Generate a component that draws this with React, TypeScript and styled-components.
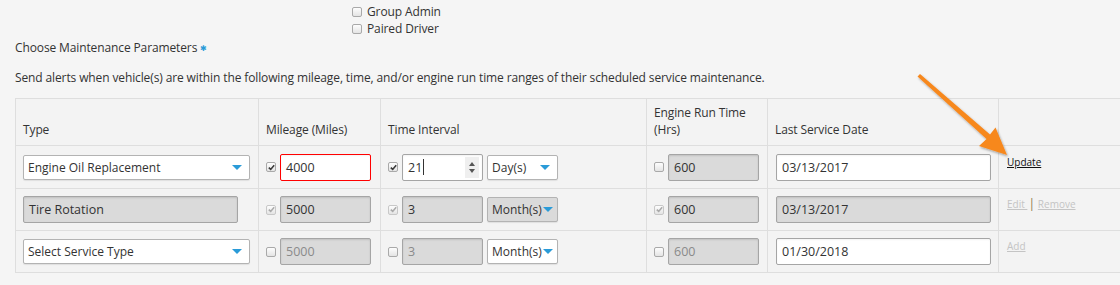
import React from "react";
import styled, { createGlobalStyle, css } from "styled-components";

const GlobalStyle = createGlobalStyle`
  html, body {
    margin: 0;
    background: #f5f5f5;
    overflow: hidden;
  }
  body {
    font-family: "Open Sans", "Liberation Sans", sans-serif;
    font-size: 12px;
    letter-spacing: -0.12px;
    color: #333;
  }
`;

const Page = styled.div`
  position: relative;
  width: 1120px;
  height: 285px;
  padding-left: 15px;
  box-sizing: border-box;
`;

const RoleList = styled.div`
  padding-top: 3px;
  margin-left: 337px;
  display: flex;
  flex-direction: column;
`;

const RoleItem = styled.label`
  display: flex;
  align-items: center;
  gap: 5px;
  line-height: 17px;
`;

const Title = styled.div`
  margin-top: 2px;
  line-height: 17px;
`;

const Required = styled.span`
  color: #2a9bd8;
  font-size: 8px;
  margin-left: 3px;
  vertical-align: 1px;
`;

const Description = styled.div`
  margin-top: 13px;
  line-height: 17px;
`;

const Table = styled.table`
  margin-top: 12px;
  border-collapse: collapse;
  table-layout: fixed;
  width: 1140px;
  background: #f3f3f3;
`;

const Th = styled.th<{ $w?: number }>`
  width: ${(p) => (p.$w ? `${p.$w}px` : "auto")};
  height: 47px;
  border: 1px solid #dedede;
  padding: 0 8px 7px 7px;
  text-align: left;
  vertical-align: bottom;
  font-weight: normal;
  line-height: 17px;
  box-sizing: border-box;
`;

const Tr = styled.tr<{ $h: number }>`
  height: ${(p) => p.$h}px;
`;

const Td = styled.td<{ $pl?: number }>`
  border: 1px solid #dedede;
  padding: 0 7px 0 ${(p) => p.$pl ?? 7}px;
  vertical-align: middle;
`;

const ActionCell = styled.td`
  border: 1px solid #dedede;
  padding: 0 7px 12px 8px;
  vertical-align: middle;
`;

const Inline = styled.div`
  display: flex;
  align-items: center;
  gap: 4px;
`;

const Box = styled.span<{ $disabled?: boolean }>`
  display: inline-flex;
  align-items: center;
  justify-content: center;
  width: 10px;
  height: 10px;
  flex: none;
  box-sizing: border-box;
  border: 1px solid ${(p) => (p.$disabled ? "#c8c8c8" : "#a9a9a9")};
  border-radius: 2px;
  background: linear-gradient(#fdfdfd, #e4e4e4);
  color: ${(p) => (p.$disabled ? "#aaa" : "#3a3a3a")};
`;

const field = css`
  box-sizing: border-box;
  display: flex;
  align-items: center;
  border-radius: 2px;
  letter-spacing: 0;
`;

type Tone = "white" | "error" | "gray" | "muted";

const TextBox = styled.div<{ $w: number; $tone: Tone }>`
  ${field};
  width: ${(p) => p.$w}px;
  height: 27px;
  padding: 0 5px;
  font-size: 12.5px;
  border: 1px solid ${(p) => (p.$tone === "error" ? "#ff0000" : "#a5a5a5")};
  background: ${(p) => (p.$tone === "white" || p.$tone === "error" ? "#fff" : "#dadada")};
  color: ${(p) => (p.$tone === "muted" ? "#8a8a8a" : "#333")};
  box-shadow: ${(p) =>
    p.$tone === "gray" || p.$tone === "muted"
      ? "inset 0 1px 2px rgba(0,0,0,0.12)"
      : "inset 0 1px 2px rgba(0,0,0,0.05)"};
`;

const Select = styled.div<{ $w: number; $gray?: boolean; $compact?: boolean }>`
  ${field};
  width: ${(p) => p.$w}px;
  height: 25px;
  font-size: 12px;
  justify-content: space-between;
  padding: ${(p) => (p.$compact ? "0 4px 0 4px" : "0 7px 0 4px")};
  border: 1px solid #b3b3b3;
  background: ${(p) => (p.$gray ? "#dadada" : "#fff")};
  box-shadow: 0 1px 1px rgba(0, 0, 0, 0.08);
`;

const Caret = styled.span`
  width: 0;
  height: 0;
  border-left: 5px solid transparent;
  border-right: 5px solid transparent;
  border-top: 5px solid #2a9bd8;
`;

const Spinner = styled.span`
  margin-left: auto;
  width: 14px;
  height: 21px;
  background: #efefef;
  display: flex;
  flex-direction: column;
  align-items: center;
  justify-content: center;
  gap: 3px;
  margin-right: -2px;
`;

const SpinArrow = styled.span<{ $up?: boolean }>`
  width: 0;
  height: 0;
  border-left: 3px solid transparent;
  border-right: 3px solid transparent;
  ${(p) => (p.$up ? "border-bottom: 4px solid #555;" : "border-top: 4px solid #555;")}
`;

const Cursor = styled.span`
  display: inline-block;
  width: 1px;
  height: 16px;
  background: #333;
  margin-left: 1px;
`;

const Action = styled.a<{ $muted?: boolean }>`
  font-size: 10px;
  letter-spacing: 0;
  text-decoration: underline;
  color: ${(p) => (p.$muted ? "#c4c4c4" : "#111")};
  cursor: pointer;
`;

const Pipe = styled.span`
  color: #8c7a4a;
  margin: 0 3px 0 1px;
  font-size: 12px;
`;

const ArrowLayer = styled.svg`
  position: absolute;
  left: 0;
  top: 0;
  pointer-events: none;
`;

function Check({ checked, disabled }: { checked?: boolean; disabled?: boolean }) {
  return (
    <Box $disabled={disabled}>
      {checked && (
        <svg width="7" height="7" viewBox="0 0 7 7">
          <path d="M0.8 3.6 L2.7 5.4 L6.2 1.2" fill="none" stroke="currentColor" strokeWidth="1.6" />
        </svg>
      )}
    </Box>
  );
}

interface Row {
  h: number;
  type: string;
  typeSelect: boolean;
  mileage: string;
  mileageOn: boolean;
  mileageDisabled?: boolean;
  mileageTone: Tone;
  interval: string;
  intervalOn: boolean;
  intervalDisabled?: boolean;
  intervalTone: Tone;
  unit: string;
  unitGray?: boolean;
  engine: string;
  engineOn: boolean;
  engineDisabled?: boolean;
  engineTone: Tone;
  date: string;
  dateGray?: boolean;
  action: "update" | "edit" | "add";
}

const rows: Row[] = [
  {
    h: 43,
    type: "Engine Oil Replacement",
    typeSelect: true,
    mileage: "4000",
    mileageOn: true,
    mileageTone: "error",
    interval: "21",
    intervalOn: true,
    intervalTone: "white",
    unit: "Day(s)",
    engine: "600",
    engineOn: false,
    engineTone: "gray",
    date: "03/13/2017",
    action: "update",
  },
  {
    h: 42,
    type: "Tire Rotation",
    typeSelect: false,
    mileage: "5000",
    mileageOn: true,
    mileageDisabled: true,
    mileageTone: "gray",
    interval: "3",
    intervalOn: true,
    intervalDisabled: true,
    intervalTone: "gray",
    unit: "Month(s)",
    unitGray: true,
    engine: "600",
    engineOn: true,
    engineDisabled: true,
    engineTone: "gray",
    date: "03/13/2017",
    dateGray: true,
    action: "edit",
  },
  {
    h: 42,
    type: "Select Service Type",
    typeSelect: true,
    mileage: "5000",
    mileageOn: false,
    mileageTone: "muted",
    interval: "3",
    intervalOn: false,
    intervalTone: "muted",
    unit: "Month(s)",
    engine: "600",
    engineOn: false,
    engineTone: "muted",
    date: "01/30/2018",
    action: "add",
  },
];

function Actions({ kind }: { kind: Row["action"] }) {
  if (kind === "update") return <Action>Update</Action>;
  if (kind === "edit")
    return (
      <>
        <Action $muted>Edit </Action>
        <Pipe>|</Pipe>
        <Action $muted>Remove</Action>
      </>
    );
  return <Action $muted>Add</Action>;
}

export default function App() {
  return (
    <>
      <GlobalStyle />
      <Page>
        <RoleList>
          <RoleItem>
            <Check />
            Group Admin
          </RoleItem>
          <RoleItem>
            <Check />
            Paired Driver
          </RoleItem>
        </RoleList>
        <Title>
          Choose Maintenance Parameters<Required>✱</Required>
        </Title>
        <Description>
          Send alerts when vehicle(s) are within the following mileage, time, and/or engine run time ranges of their
          scheduled service maintenance.
        </Description>
        <Table>
          <thead>
            <tr>
              <Th $w={243}>Type</Th>
              <Th $w={122}>Mileage (Miles)</Th>
              <Th $w={266}>Time Interval</Th>
              <Th $w={121}>Engine Run Time (Hrs)</Th>
              <Th $w={231}>Last Service Date</Th>
              <Th />
            </tr>
          </thead>
          <tbody>
            {rows.map((r, i) => (
              <Tr $h={r.h} key={i}>
                <Td>
                  {r.typeSelect ? (
                    <Select $w={227}>
                      {r.type}
                      <Caret />
                    </Select>
                  ) : (
                    <TextBox $w={215} $tone="gray">
                      {r.type}
                    </TextBox>
                  )}
                </Td>
                <Td>
                  <Inline>
                    <Check checked={r.mileageOn} disabled={r.mileageDisabled} />
                    <TextBox $w={91} $tone={r.mileageTone}>
                      {r.mileage}
                    </TextBox>
                  </Inline>
                </Td>
                <Td>
                  <Inline>
                    <Check checked={r.intervalOn} disabled={r.intervalDisabled} />
                    <TextBox $w={81} $tone={r.intervalTone}>
                      {r.interval}
                      {r.action === "update" && (
                        <>
                          <Cursor />
                          <Spinner>
                            <SpinArrow $up />
                            <SpinArrow />
                          </Spinner>
                        </>
                      )}
                    </TextBox>
                    <Select $w={71} $gray={r.unitGray} $compact={r.unit !== "Day(s)"}>
                      {r.unit}
                      <Caret />
                    </Select>
                  </Inline>
                </Td>
                <Td>
                  <Inline>
                    <Check checked={r.engineOn} disabled={r.engineDisabled} />
                    <TextBox $w={91} $tone={r.engineTone}>
                      {r.engine}
                    </TextBox>
                  </Inline>
                </Td>
                <Td $pl={8}>
                  <TextBox $w={215} $tone={r.dateGray ? "gray" : "white"}>
                    {r.date}
                  </TextBox>
                </Td>
                <ActionCell>
                  <Actions kind={r.action} />
                </ActionCell>
              </Tr>
            ))}
          </tbody>
        </Table>
        <ArrowLayer width="1120" height="285" viewBox="0 0 1120 285">
          <defs>
            <filter id="arrowShadow" x="-20%" y="-20%" width="140%" height="140%">
              <feDropShadow dx="1" dy="1.5" stdDeviation="1.2" floodColor="#000" floodOpacity="0.35" />
            </filter>
          </defs>
          <polygon
            points="920,74 990,134.5 995.5,127.5 1007,155 979,146 986.5,139 917.5,76.5"
            fill="#f7881f"
            filter="url(#arrowShadow)"
          />
        </ArrowLayer>
      </Page>
    </>
  );
}
